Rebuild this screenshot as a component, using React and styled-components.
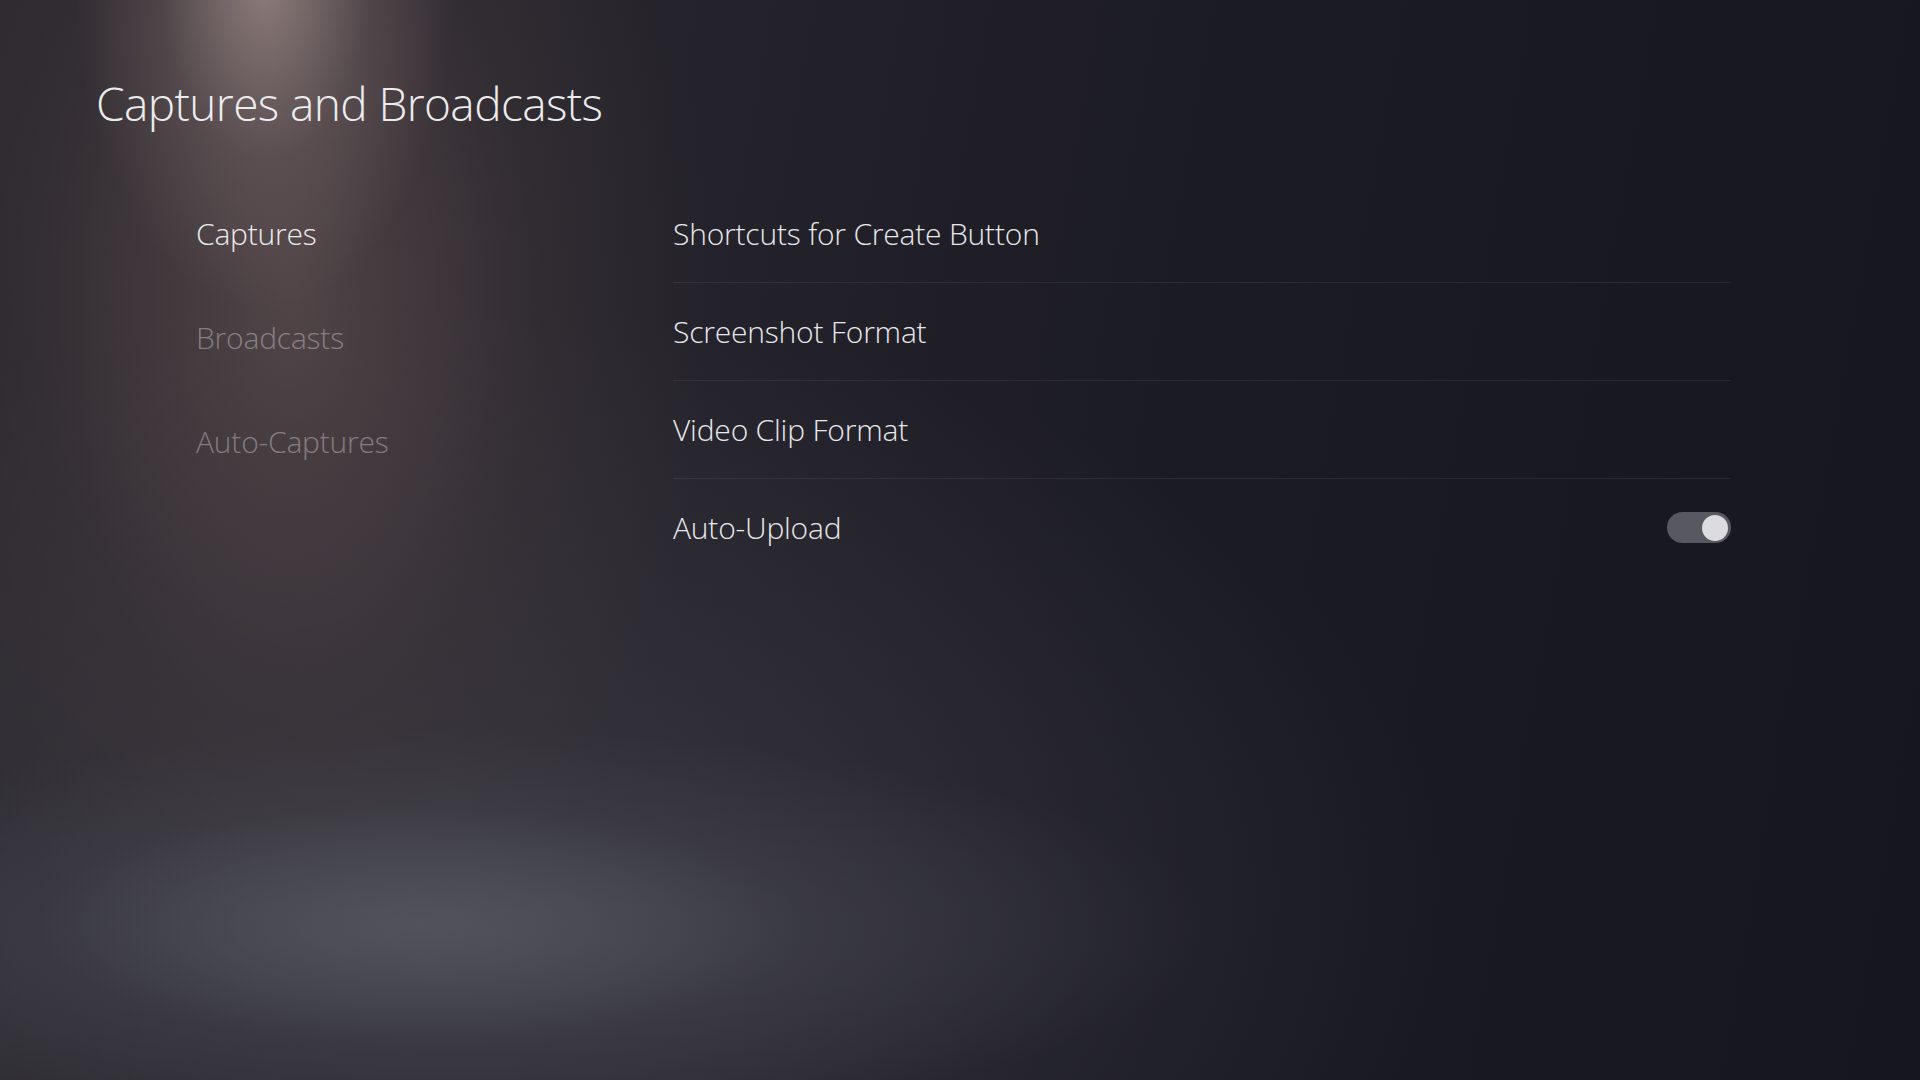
import React from 'react';
import styled, { createGlobalStyle } from 'styled-components';

const GlobalStyle = createGlobalStyle`
  html, body {
    margin: 0;
    padding: 0;
    background: #15161f;
  }
  * {
    box-sizing: border-box;
  }
`;

const Screen = styled.div`
  width: 1920px;
  height: 1080px;
  overflow: hidden;
  padding: 71px 0 0 96px;
  font-family: "Open Sans", "Noto Sans", sans-serif;
  font-weight: 300;
  color: #ececef;
  background:
    radial-gradient(ellipse 190px 330px at 265px -20px, rgba(170, 150, 146, 0.75), rgba(150, 130, 128, 0.25) 55%, rgba(120, 100, 100, 0) 100%),
    radial-gradient(ellipse 380px 120px at 420px 925px, rgba(86, 88, 96, 0.7), rgba(80, 82, 90, 0) 100%),
    radial-gradient(ellipse 760px 200px at 450px 930px, rgba(74, 75, 84, 0.75), rgba(70, 70, 80, 0) 100%),
    radial-gradient(ellipse 420px 700px at 290px 300px, rgba(88, 74, 76, 0.85), rgba(70, 60, 64, 0.35) 60%, rgba(60, 54, 60, 0) 100%),
    radial-gradient(ellipse 1000px 600px at 450px 900px, rgba(58, 56, 64, 0.9), rgba(50, 50, 58, 0) 100%),
    linear-gradient(100deg, #2a272d 0%, #24222a 35%, #1b1b24 60%, #15161f 100%);
`;

const Title = styled.h1`
  margin: 0;
  font-size: 46px;
  line-height: 64px;
  font-weight: 300;
  letter-spacing: -0.6px;
`;

const Body = styled.div`
  display: flex;
  align-items: flex-start;
  margin-top: 47px;
  padding-left: 100px;
`;

const Nav = styled.nav`
  width: 477px;
  display: flex;
  flex-direction: column;
`;

const NavItem = styled.div`
  height: 104px;
  display: flex;
  align-items: center;
  font-size: 30px;
  line-height: 40px;
  letter-spacing: -0.2px;
  color: ${({ active }) => (active ? '#ececef' : 'rgba(236, 236, 240, 0.38)')};
`;

const List = styled.div`
  width: 1058px;
  margin-top: 3px;
  display: flex;
  flex-direction: column;
`;

const Row = styled.div`
  height: 98px;
  display: flex;
  align-items: center;
  justify-content: space-between;
  font-size: 30px;
  line-height: 40px;
  letter-spacing: -0.2px;
  color: #e8e8ec;
  border-bottom: 1px solid ${({ last }) => (last ? 'transparent' : 'rgba(255, 255, 255, 0.07)')};
`;

const Toggle = styled.div`
  width: 64px;
  height: 31px;
  border-radius: 16px;
  background: #575861;
  display: flex;
  align-items: center;
  justify-content: ${({ on }) => (on ? 'flex-end' : 'flex-start')};
  padding: 0 3px;
`;

const Knob = styled.div`
  width: 26px;
  height: 26px;
  border-radius: 50%;
  background: #dcdce0;
`;

const navItems = ['Captures', 'Broadcasts', 'Auto-Captures'];

const rows = [
  { label: 'Shortcuts for Create Button' },
  { label: 'Screenshot Format' },
  { label: 'Video Clip Format' },
  { label: 'Auto-Upload', toggle: true },
];

export default function App() {
  return (
    <>
      <GlobalStyle />
      <Screen>
        <Title>Captures and Broadcasts</Title>
        <Body>
          <Nav>
            {navItems.map((item, i) => (
              <NavItem key={item} active={i === 0}>{item}</NavItem>
            ))}
          </Nav>
          <List>
            {rows.map((row, i) => (
              <Row key={row.label} last={i === rows.length - 1}>
                <span>{row.label}</span>
                {row.toggle && (
                  <Toggle on>
                    <Knob />
                  </Toggle>
                )}
              </Row>
            ))}
          </List>
        </Body>
      </Screen>
    </>
  );
}
